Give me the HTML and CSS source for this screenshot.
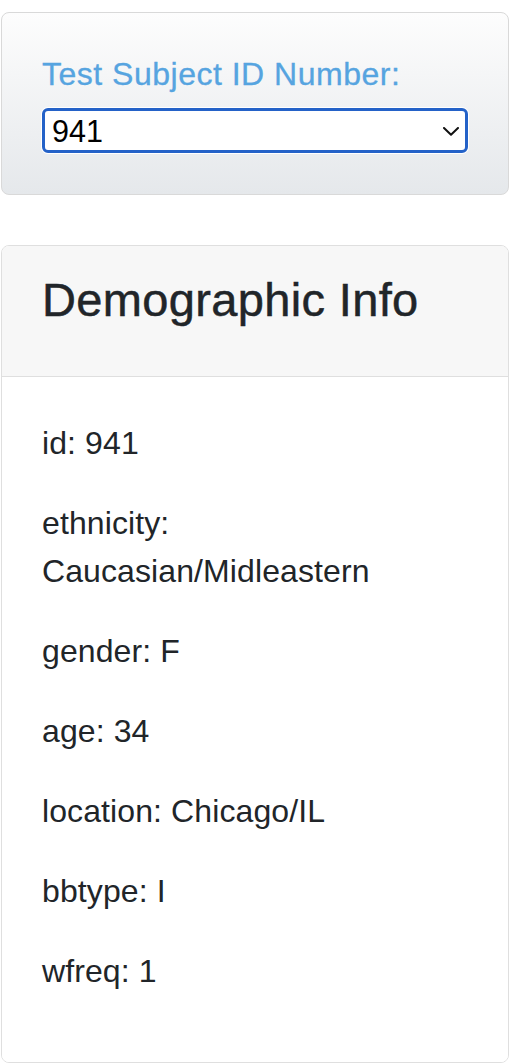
FILE: index.html
```html
<!DOCTYPE html>
<html lang="en">
<head>
<meta charset="utf-8">
<title>Demographic Info</title>
<link rel="stylesheet" href="styles.css">
</head>
<body>
  <div class="well">
    <label class="field-label">Test Subject ID Number:</label>
    <div class="select-box">
      <span class="select-value">941</span>
      <svg class="chevron" width="16" height="9" viewBox="0 0 16 9" aria-hidden="true">
        <polyline points="1,1 8,7.8 15,1" fill="none" stroke="#111" stroke-width="2" stroke-linecap="round" stroke-linejoin="round"/>
      </svg>
    </div>
  </div>

  <div class="card">
    <div class="card-header">
      <h3 class="card-title">Demographic Info</h3>
    </div>
    <div class="card-body">
      <p>id: 941</p>
      <p>ethnicity: Caucasian/Midleastern</p>
      <p>gender: F</p>
      <p>age: 34</p>
      <p>location: Chicago/IL</p>
      <p>bbtype: I</p>
      <p>wfreq: 1</p>
    </div>
  </div>
</body>
</html>
```

FILE: styles.css
```css
html, body {
  margin: 0;
  padding: 0;
  background: #ffffff;
}

body {
  font-family: "Liberation Sans", Arial, Helvetica, sans-serif;
  color: #212529;
  font-size: 32px;
  line-height: 48px;
}

.well {
  margin: 12px 1px 0;
  padding: 37px 40px 41px;
  border: 1px solid #d9d9d9;
  border-radius: 8px;
  background: linear-gradient(to bottom, #fdfdfd 0%, #e5e8eb 100%);
}

.field-label {
  display: block;
  color: #56a4e0;
  font-size: 32px;
  line-height: 48px;
  letter-spacing: 0.5px;
  -webkit-text-stroke: 0.3px #56a4e0;
  margin-bottom: 10px;
}

.select-box {
  box-sizing: border-box;
  height: 45px;
  display: flex;
  align-items: center;
  justify-content: space-between;
  padding: 0 6px 0 7px;
  background: #ffffff;
  border: 3px solid #2462c8;
  border-radius: 6px;
  box-shadow: 0 0 0 1px #ffffff;
}

.select-value {
  font-size: 30.5px;
  line-height: 38px;
  padding-top: 1px;
  color: #000000;
}

.chevron {
  display: block;
  margin-top: 1px;
}

.card {
  margin: 50px 1px 0;
  border: 1px solid #dfdfdf;
  border-radius: 8px;
  overflow: hidden;
}

.card-header {
  background: #f7f7f7;
  border-bottom: 1px solid #dfdfdf;
  padding: 26px 40px 48px 40px;
}

.card-title {
  margin: 0;
  font-size: 47px;
  line-height: 56px;
  font-weight: normal;
  letter-spacing: 0.35px;
  -webkit-text-stroke: 0.5px #212529;
  color: #212529;
}

.card-body {
  background: #ffffff;
  padding: 42px 40px 35px 40px;
}

.card-body p {
  margin: 0 0 32px;
  font-size: 32px;
  line-height: 48px;
  letter-spacing: 0.1px;
}
```
